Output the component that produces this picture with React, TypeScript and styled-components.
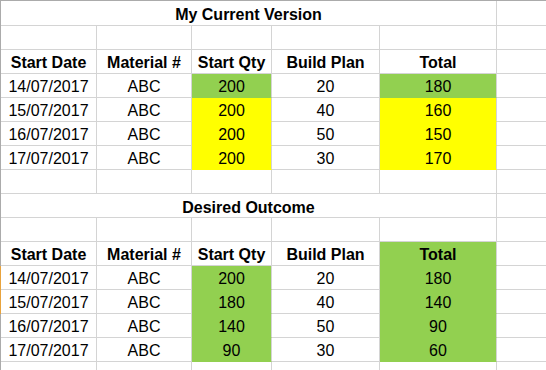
import styled, { createGlobalStyle } from 'styled-components';

const GlobalStyle = createGlobalStyle`
  html, body {
    margin: 0;
    padding: 0;
    background: #fff;
    overflow: hidden;
  }
  body {
    font-family: "Liberation Sans", Arial, sans-serif;
    color: #000;
  }
`;

const GRID = '#d4d4d4';
const GREEN = '#92d050';
const YELLOW = '#ffff00';

type Fill = 'green' | 'yellow' | undefined;

const fillColor = (f: Fill) => (f === 'green' ? GREEN : f === 'yellow' ? YELLOW : undefined);

const Sheet = styled.div`
  width: 546px;
  border-top: 1px solid #ababab;
`;

const Row = styled.div<{ $mark?: boolean; $tall?: boolean }>`
  display: grid;
  grid-template-columns: 96px 95px 80px 108px 117px 1fr;
  height: ${(p) => (p.$tall ? 25 : 24)}px;
  border-left: 1px solid ${(p) => (p.$mark ? '#e8a33d' : '#ababab')};
`;

const Cell = styled.div<{ $fill?: Fill; $bold?: boolean }>`
  box-sizing: border-box;
  height: 100%;
  padding-top: 2px;
  border-right: 1px solid ${GRID};
  border-bottom: 1px solid ${(p) => fillColor(p.$fill) ?? GRID};
  background: ${(p) => fillColor(p.$fill) ?? 'transparent'};
  font-size: 16px;
  line-height: 21px;
  font-weight: ${(p) => (p.$bold ? 700 : 400)};
  text-align: center;
  white-space: nowrap;
  overflow: hidden;
`;

const Title = styled(Cell)`
  grid-column: span 5;
  padding-top: 3px;
  font-weight: 700;
`;

const Spare = styled(Cell)`
  border-right: none;
`;

type Line = { date: string; qty: string; plan: string; total: string; qtyFill?: Fill; totalFill?: Fill };

const current: Line[] = [
  { date: '14/07/2017', qty: '200', plan: '20', total: '180', qtyFill: 'green', totalFill: 'green' },
  { date: '15/07/2017', qty: '200', plan: '40', total: '160', qtyFill: 'yellow', totalFill: 'yellow' },
  { date: '16/07/2017', qty: '200', plan: '50', total: '150', qtyFill: 'yellow', totalFill: 'yellow' },
  { date: '17/07/2017', qty: '200', plan: '30', total: '170', qtyFill: 'yellow', totalFill: 'yellow' },
];

const desired: Line[] = [
  { date: '14/07/2017', qty: '200', plan: '20', total: '180', qtyFill: 'green', totalFill: 'green' },
  { date: '15/07/2017', qty: '180', plan: '40', total: '140', qtyFill: 'green', totalFill: 'green' },
  { date: '16/07/2017', qty: '140', plan: '50', total: '90', qtyFill: 'green', totalFill: 'green' },
  { date: '17/07/2017', qty: '90', plan: '30', total: '60', qtyFill: 'green', totalFill: 'green' },
];

const BlankRow = () => (
  <Row>
    <Cell />
    <Cell />
    <Cell />
    <Cell />
    <Cell />
    <Spare />
  </Row>
);

const Block = ({
  title,
  lines,
  totalHeadFill,
  tall,
  marked = [],
}: {
  title: string;
  lines: Line[];
  totalHeadFill?: Fill;
  tall?: boolean;
  marked?: number[];
}) => (
  <>
    <Row $tall={tall}>
      <Title>{title}</Title>
      <Spare />
    </Row>
    <BlankRow />
    <Row>
      <Cell $bold>Start Date</Cell>
      <Cell $bold>Material #</Cell>
      <Cell $bold>Start Qty</Cell>
      <Cell $bold>Build Plan</Cell>
      <Cell $bold $fill={totalHeadFill}>
        Total
      </Cell>
      <Spare />
    </Row>
    {lines.map((l, i) => (
      <Row key={l.date} $mark={marked.includes(i)}>
        <Cell>{l.date}</Cell>
        <Cell>ABC</Cell>
        <Cell $fill={l.qtyFill}>{l.qty}</Cell>
        <Cell>{l.plan}</Cell>
        <Cell $fill={l.totalFill}>{l.total}</Cell>
        <Spare />
      </Row>
    ))}
    <BlankRow />
  </>
);

export default function App() {
  return (
    <>
      <GlobalStyle />
      <Sheet>
        <Block title="My Current Version" lines={current} tall />
        <Block title="Desired Outcome" lines={desired} totalHeadFill="green" marked={[0, 1]} />
      </Sheet>
    </>
  );
}
